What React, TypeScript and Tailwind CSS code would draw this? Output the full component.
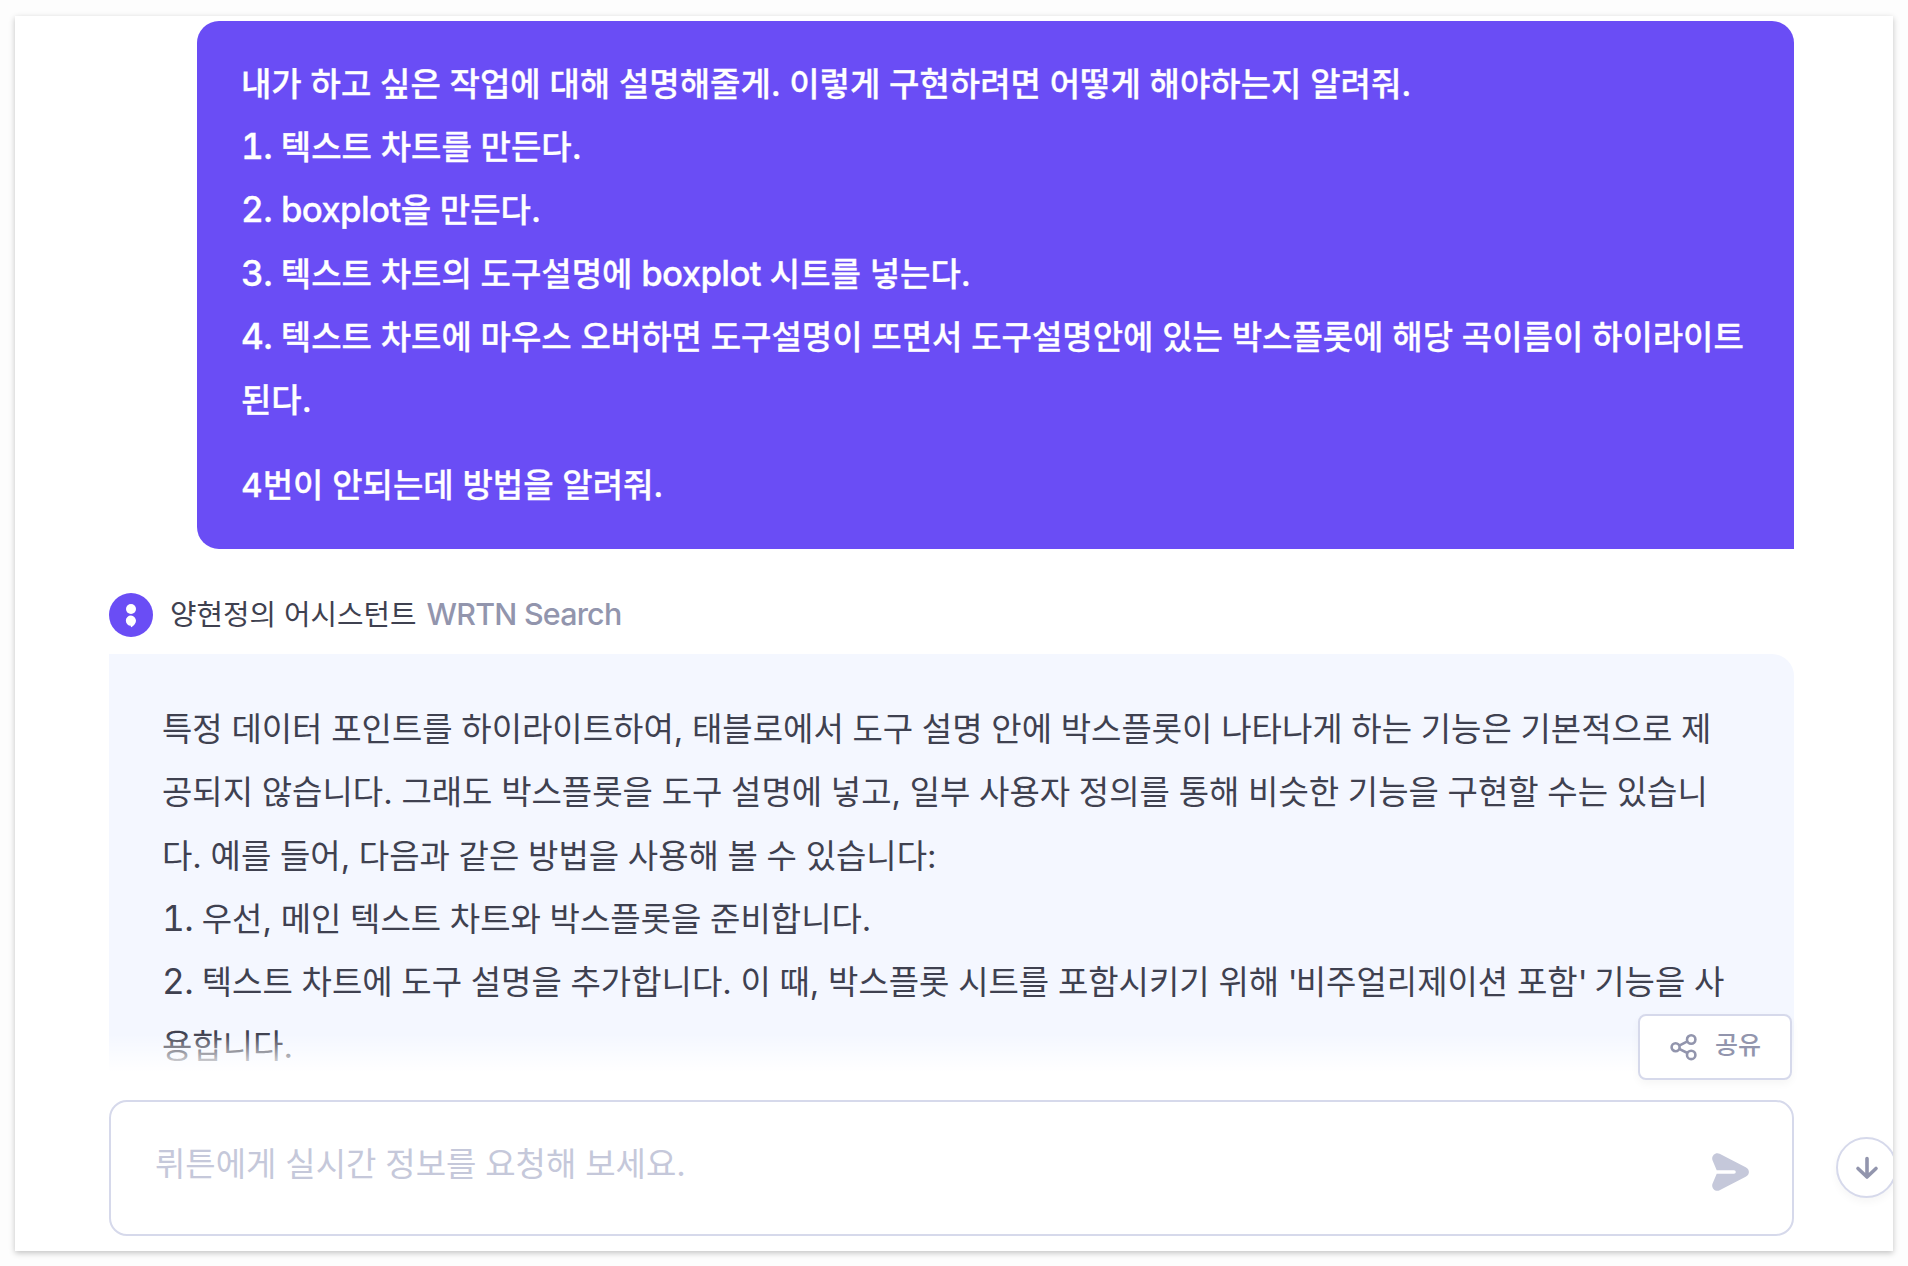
import type { ReactNode } from "react"

function Num({ children }: { children: ReactNode }) {
  return <span className="text-[35.2px] leading-none tracking-[-0.6px] tabular-nums">{children}</span>
}

function Latin({ children }: { children: ReactNode }) {
  return <span className="text-[34.8px] leading-none tracking-[-0.65px]">{children}</span>
}

function Quote() {
  return <span className="tracking-[-2px]">'</span>
}

const questionLines: ReactNode[] = [
  <>내가 하고 싶은 작업에 대해 설명해줄게. 이렇게 구현하려면 어떻게 해야하는지 알려줘.</>,
  <><Num>1.</Num> 텍스트 차트를 만든다.</>,
  <><Num>2.</Num> <Latin>boxplot</Latin>을 만든다.</>,
  <><Num>3.</Num> 텍스트 차트의 도구설명에 <Latin>boxplot</Latin> 시트를 넣는다.</>,
  <><Num>4.</Num> 텍스트 차트에 마우스 오버하면 도구설명이 뜨면서 도구설명안에 있는 박스플롯에 해당 곡이름이 하이라이트</>,
  <>된다.</>,
]

const answerLines: ReactNode[] = [
  <>특정 데이터 포인트를 하이라이트하여, 태블로에서 도구 설명 안에 박스플롯이 나타나게 하는 기능은 기본적으로 제</>,
  <>공되지 않습니다. 그래도 박스플롯을 도구 설명에 넣고, 일부 사용자 정의를 통해 비슷한 기능을 구현할 수는 있습니</>,
  <>다. 예를 들어, 다음과 같은 방법을 사용해 볼 수 있습니다:</>,
  <><Num>1.</Num> 우선, 메인 텍스트 차트와 박스플롯을 준비합니다.</>,
  <><Num>2.</Num> 텍스트 차트에 도구 설명을 추가합니다. 이 때, 박스플롯 시트를 포함시키기 위해 <Quote />비주얼리제이션 포함<Quote /> 기능을 사</>,
  <>용합니다.</>,
]

function Avatar() {
  return (
    <svg className="size-11 shrink-0" viewBox="0 0 44 44">
      <circle cx="22" cy="22" r="22" fill="#6a4df5" />
      <circle cx="22" cy="16" r="5" fill="#fff" />
      <path d="M22 22.6a5.2 5.2 0 0 1 5 5.2c0 2.6-2 4.7-4.3 6.2-.4.3-.9.1-.9-.4v-.9a5 5 0 0 1 .2-10.1Z" fill="#fff" />
    </svg>
  )
}

function ShareIcon() {
  return (
    <svg className="h-[27px] w-[27px] shrink-0" viewBox="0 0 27 27" fill="none" stroke="#9295ad" strokeWidth="2.6">
      <circle cx="5.6" cy="13.2" r="4" />
      <circle cx="21.2" cy="5.5" r="4.2" />
      <circle cx="21.2" cy="20.9" r="4.2" />
      <path d="M9.2 11.6 17.4 7.4M9.2 14.8l8.2 4.2" />
    </svg>
  )
}

function SendIcon() {
  return (
    <svg className="mt-[7px] h-[38px] w-[37px]" viewBox="0 0 37 38">
      <path
        d="M.6 7.6C-1.2 3.4 3.2-1.4 7.6.8L33.7 14.2C38 16.4 38 21.6 33.7 23.8L7.6 37.2C3.2 39.4-1.2 34.6.6 30.4L4.7 20.8H22A1.8 1.8 0 0 0 22 17.2H4.7Z"
        fill="#c5c8da"
      />
    </svg>
  )
}

function ArrowDownIcon() {
  return (
    <svg className="h-[24px] w-[24px]" viewBox="0 0 24 24" fill="none" stroke="#9295ad" strokeWidth="3.6" strokeLinecap="round" strokeLinejoin="round">
      <path d="M12 2.5V21M3 12.5 12 21l9-8.5" />
    </svg>
  )
}

export default function App() {
  return (
    <div className="h-[1266px] w-[1908px] overflow-hidden bg-[#fdfdfd] pt-4 pl-[15px] font-[Inter,'Noto_Sans_CJK_KR',sans-serif]">
      <div className="relative flex h-[1235px] w-[1878px] flex-col overflow-hidden bg-white pt-[5px] pr-[99px] pl-[94px] shadow-[0_2px_6px_rgba(0,0,0,0.24)]">
        {/* Question */}
        <div className="ml-[88px] h-[528px] shrink-0 rounded-[22px] rounded-br-none bg-[#6a4df5] pt-[31.5px] pl-11 text-[33px] leading-[63.36px] font-medium whitespace-nowrap text-white [-webkit-text-stroke:0.3px_white]">
          {questionLines.map((line, i) => (
            <p key={i} className="h-[63.36px]">{line}</p>
          ))}
          <p className="mt-[21.5px]">4번이 안되는데 방법을 알려줘.</p>
        </div>

        {/* Assistant name */}
        <div className="mt-11 flex h-11 shrink-0 items-center text-[28.8px] whitespace-nowrap">
          <Avatar />
          <span className="ml-[17px] text-[#3f4150]">양현정의 어시스턴트</span>
          <span className="ml-[10px] text-[30.4px] font-medium tracking-[-0.75px] text-[#9295ad]">WRTN Search</span>
        </div>

        {/* Answer */}
        <div className="relative mt-[17px] h-[418px] shrink-0 overflow-hidden rounded-tr-[22px] bg-[#f4f7ff] pt-11 pl-[53px] text-[33px] leading-[63.36px] [word-spacing:-0.6px] whitespace-nowrap text-[#3f4150]">
          {answerLines.map((line, i) => (
            <p key={i} className="h-[63.36px]">{line}</p>
          ))}
          <div className="absolute inset-x-0 bottom-0 h-[38px] bg-gradient-to-b from-white/0 to-white" />
        </div>

        {/* Prompt input */}
        <div className="mt-7 flex h-[136px] shrink-0 items-center justify-between rounded-[18px] border-2 border-[#d6d9eb] bg-white pr-[43px] pl-11">
          <span className="mb-[9px] text-[33px] leading-[60px] [word-spacing:-0.4px] text-[#c5c8da]">뤼튼에게 실시간 정보를 요청해 보세요.</span>
          <SendIcon />
        </div>

        <button className="absolute top-[998px] left-[1623px] flex h-[66px] w-[154px] items-center gap-[18px] rounded-lg border-2 border-[#d6d9eb] bg-white pl-[30px] text-[25px] font-medium text-[#9295ad] shadow-[0_4px_8px_rgba(0,0,0,0.04)]">
          <ShareIcon />
          <span className="mb-[3px]">공유</span>
        </button>

        <button className="absolute top-[1121px] left-[1821px] flex size-[61px] items-center justify-center rounded-full border-2 border-[#d6d9eb] bg-white shadow-[0_4px_8px_rgba(0,0,0,0.04)]">
          <ArrowDownIcon />
        </button>
      </div>
    </div>
  )
}
